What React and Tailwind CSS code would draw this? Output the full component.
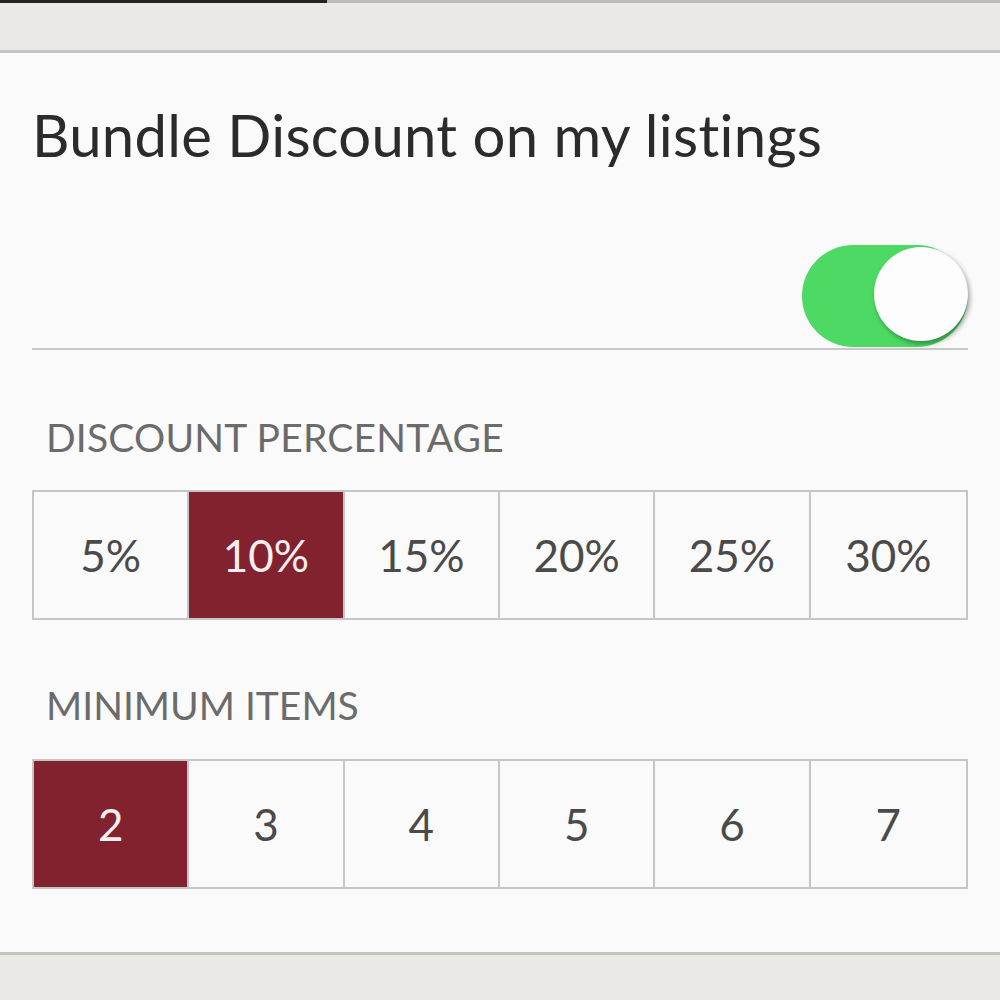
import React, { useState } from "react";

const percents = ["5%", "10%", "15%", "20%", "25%", "30%"];
const minimums = ["2", "3", "4", "5", "6", "7"];

function Toggle({ on, onChange }) {
  return (
    <button
      onClick={() => onChange(!on)}
      className={`relative w-[166px] h-[102px] rounded-full ${
        on ? "bg-[#4cd964]" : "bg-[#e5e5e5]"
      }`}
    >
      <span
        className={`absolute top-[2px] w-[94px] h-[94px] rounded-full bg-[#fdfdfd] shadow-[2px_3px_5px_rgba(0,0,0,0.35)] ${
          on ? "left-[72px]" : "left-[2px]"
        }`}
      />
    </button>
  );
}

function Picker({ options, value, onPick }) {
  return (
    <div className="grid grid-cols-6 border-2 border-[#c6c6c6] h-[130px]">
      {options.map((opt, idx) => (
        <button
          key={opt}
          onClick={() => onPick(opt)}
          className={`flex items-center justify-center text-[44px] ${
            idx < options.length - 1 ? "border-r-2 border-[#c6c6c6]" : ""
          } ${
            value === opt
              ? "bg-[#82222f] text-[#f6eef0]"
              : "text-[#4a4a4a]"
          }`}
        >
          {opt}
        </button>
      ))}
    </div>
  );
}

export default function App() {
  const [enabled, setEnabled] = useState(true);
  const [percent, setPercent] = useState("10%");
  const [minItems, setMinItems] = useState("2");

  return (
    <div
      className="h-[1000px] bg-[#ebe9e5] overflow-hidden"
      style={{ fontFamily: "Lato, 'Open Sans', sans-serif" }}
    >
      <div className="flex h-[3px]">
        <div className="w-[327px] bg-[#222222]" />
        <div className="flex-1 bg-[#bdbcb8]" />
      </div>
      <div className="h-[47px]" />
      <div className="bg-[#fbfafa] border-y-[3px] border-[#c5c4c0] h-[905px] px-[32px]">
        <h1 className="pt-[47px] text-[58px] leading-[70px] text-[#2b2b2b] tracking-[0.3px]">
          Bundle Discount on my listings
        </h1>
        <div className="flex justify-end border-b-2 border-[#c8c8c8] mt-[75px] pb-[1px]">
          <Toggle on={enabled} onChange={setEnabled} />
        </div>
        <div className="pl-[14px] mt-[64px] mb-[29px] text-[39px] leading-[47px] text-[#6b6b6b] uppercase tracking-[0.2px]">
          Discount Percentage
        </div>
        <Picker options={percents} value={percent} onPick={setPercent} />
        <div className="pl-[14px] mt-[62px] mb-[30px] text-[39px] leading-[47px] text-[#6b6b6b] uppercase">
          Minimum Items
        </div>
        <Picker options={minimums} value={minItems} onPick={setMinItems} />
      </div>
    </div>
  );
}
